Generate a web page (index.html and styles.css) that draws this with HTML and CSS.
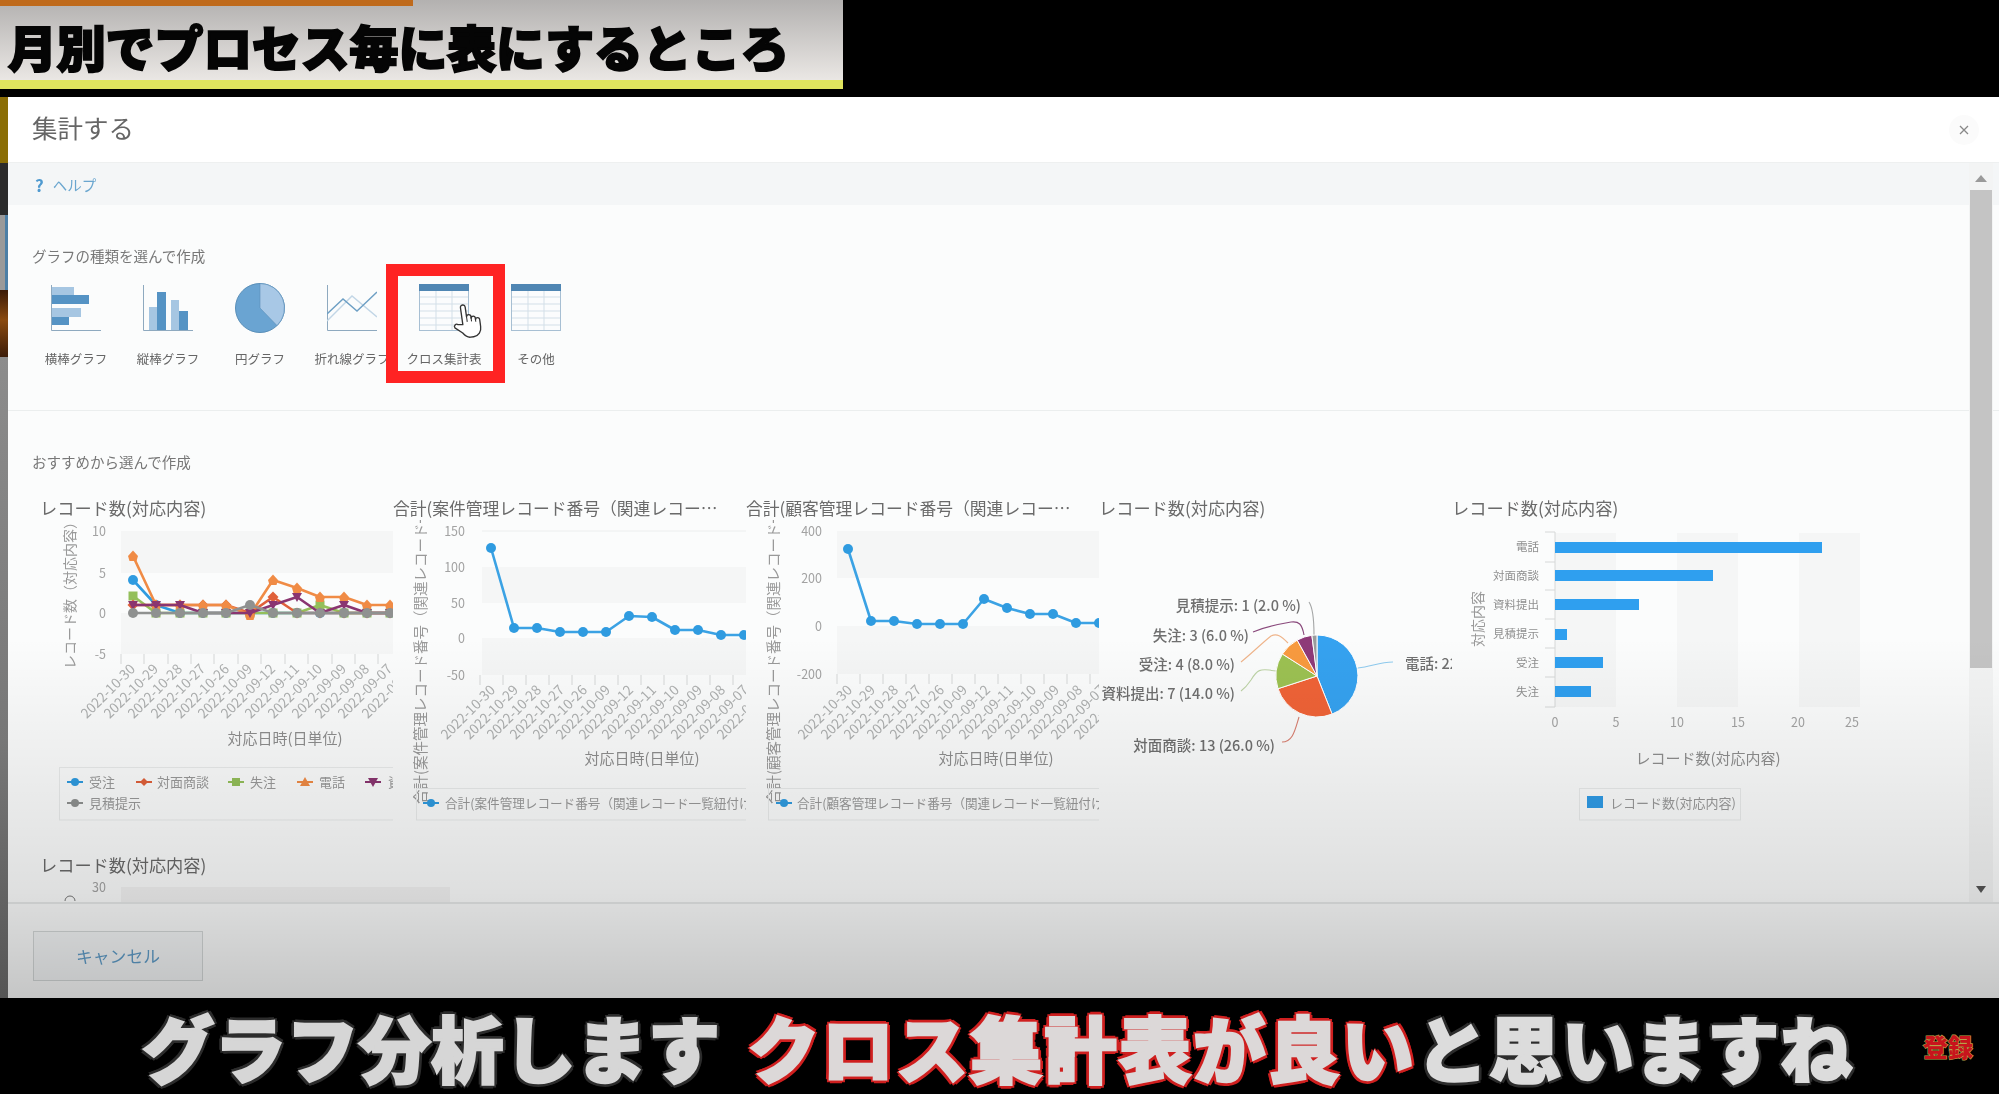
FILE: index.html
```html
<!DOCTYPE html>
<html lang="ja">
<head>
<meta charset="utf-8">
<title>集計する</title>
<link rel="stylesheet" href="styles.css">
</head>
<body>
<header class="top-bar">
  <div class="banner">
    <div class="banner-strip"></div>
    <div class="banner-text">月別でプロセス毎に表にするところ</div>
  </div>
</header>

<div class="stage">
  <div class="edge">
    <div class="edge-a"></div><div class="edge-b"></div><div class="edge-c"></div><div class="edge-d"></div><div class="edge-e"></div>
  </div>
  <main class="modal">
    <div class="modal-head">
      <h1 class="modal-title">集計する</h1>
      <div class="close"><svg width="10" height="10" viewBox="0 0 10 10"><path d="M1 1 9 9M9 1 1 9" class="close-x"/></svg></div>
    </div>

    <div class="modal-body">
      <div class="help"><span class="help-q">?</span><span>ヘルプ</span></div>

      <section class="types">
        <h2 class="label">グラフの種類を選んで作成</h2>
        <div class="type-row">
          <div class="type">
            <svg class="type-icon" viewBox="0 0 50 48">
              <path class="ic-axis" d="M.5 1V46.5H50"/>
              <rect class="ic-light" x="1" y="3" width="22" height="8"/><rect class="ic-dark" x="1" y="11" width="37" height="9"/>
              <rect class="ic-light" x="1" y="24" width="29" height="9"/><rect class="ic-dark" x="1" y="33" width="17" height="8"/>
            </svg>
            <span>横棒グラフ</span>
          </div>
          <div class="type">
            <svg class="type-icon" viewBox="0 0 50 48">
              <path class="ic-axis" d="M.5 1V46.5H50"/>
              <rect class="ic-light" x="6" y="23" width="8" height="23"/><rect class="ic-dark" x="14" y="8" width="9" height="38"/>
              <rect class="ic-light" x="28" y="16" width="8" height="30"/><rect class="ic-dark" x="36" y="27" width="9" height="19"/>
            </svg>
            <span>縦棒グラフ</span>
          </div>
          <div class="type">
            <svg class="type-icon" viewBox="0 0 50 50">
              <circle class="ic-pie" cx="25" cy="25" r="24.5"/>
              <path class="ic-slice" d="M25 25V.5A24.5 24.5 0 0 1 42 42.600Z"/>
            </svg>
            <span>円グラフ</span>
          </div>
          <div class="type">
            <svg class="type-icon" viewBox="0 0 50 48">
              <path class="ic-axis" d="M.5 1V46.500H50"/>
              <path class="ic-line-l" d="M0 37 25 12 50 33"/>
              <path class="ic-line-d" d="M0 30 16 15 30 27 50 8"/>
            </svg>
            <span>折れ線グラフ</span>
          </div>
          <div class="type selected">
            <svg class="type-icon" viewBox="0 0 50 48">
              <g id="tbl">
                <rect class="tb-frame" x=".5" y=".5" width="49" height="46"/>
                <path class="tb-grid" d="M1 13H49M1 20H49M1 27H49M1 34H49M1 41H49M17 7V46M33 7V46"/>
                <rect class="tb-head" x="0" y="0" width="50" height="7"/>
              </g>
            </svg>
            <span>クロス集計表</span>
            <svg class="hand" viewBox="0 0 28 34">
              <path class="hand-body" d="M10 20V3.500a2.300 2.300 0 0 1 4.600 0V13a2.100 2.100 0 0 1 4.200.6V15a2 2 0 0 1 4 .6V17a2 2 0 0 1 4 .6V24c0 5-3 9-8 9h-3c-3 0-5-2-7-5L2 22a2.200 2.200 0 0 1 3.400-2.700Z"/>
              <path class="hand-line" d="M14.600 13V18M18.800 14V18M22.800 16V19"/>
            </svg>
          </div>
          <div class="type">
            <svg class="type-icon" viewBox="0 0 50 48"><use href="#tbl"/></svg>
            <span>その他</span>
          </div>
        </div>
      </section>

      <section class="recommend">
        <h2 class="label">おすすめから選んで作成</h2>
        <div class="charts">

          <article class="chart">
            <h3 class="chart-title">レコード数(対応内容)</h3>
            <svg class="chart-svg" viewBox="0 0 353 305">
              <defs>
                <marker id="mb" markerUnits="userSpaceOnUse" markerWidth="12" markerHeight="12" refX="6" refY="6"><circle cx="6" cy="6" r="5" fill="#2f9be0"/></marker>
                <marker id="mr" markerUnits="userSpaceOnUse" markerWidth="12" markerHeight="12" refX="6" refY="6"><path d="M6 .5 11.500 6 6 11.500 .5 6Z" fill="#e0603a"/></marker>
                <marker id="mg" markerUnits="userSpaceOnUse" markerWidth="12" markerHeight="12" refX="6" refY="6"><rect x="1.500" y="1.500" width="9" height="9" fill="#94bf5a"/></marker>
                <marker id="mo" markerUnits="userSpaceOnUse" markerWidth="12" markerHeight="12" refX="6" refY="6"><path d="M6 .5 11 6 9.500 11H2.500L1 6Z" fill="#f08b45"/></marker>
                <marker id="mp" markerUnits="userSpaceOnUse" markerWidth="12" markerHeight="12" refX="6" refY="6"><path d="M1 2H11L6 11Z" fill="#8a3570"/></marker>
                <marker id="mk" markerUnits="userSpaceOnUse" markerWidth="12" markerHeight="12" refX="6" refY="6"><circle cx="6" cy="6" r="5" fill="#8f9190"/></marker>
              </defs>
              <rect class="band" x="81" y="11" width="273" height="42"/>
              <rect class="band" x="81" y="93" width="273" height="41"/>
              <g class="num" text-anchor="end">
                <text x="66" y="16">10</text><text x="66" y="58">5</text><text x="66" y="98">0</text><text x="66" y="139">-5</text>
              </g>
              <path class="tick" d="M81 134v10M104 134v10M128 134v10M151 134v10M174 134v10M198 134v10M221 134v10M245 134v10M268 134v10M292 134v10M315 134v10M338 134v10"/>
              <text class="ytitle" transform="translate(35 72) rotate(-90)" text-anchor="middle">レコード数（対応内容）</text>
              <polyline class="s s-blue" points="93,60 116,85 140,93 163,93 186,93 210,93 233,93 257,93 280,93 304,93 327,93 350,93 373,93" marker-start="url(#mb)" marker-mid="url(#mb)" marker-end="url(#mb)"/>
              <polyline class="s s-green" points="93,76 116,93 140,93 163,93 186,93 210,93 233,93 257,93 280,85 304,93 327,93 350,93 373,93" marker-start="url(#mg)" marker-mid="url(#mg)" marker-end="url(#mg)"/>
              <polyline class="s s-red" points="93,85 116,85 140,85 163,85 186,85 210,93 233,77 257,93 280,93 304,93 327,93 350,93 373,93" marker-start="url(#mr)" marker-mid="url(#mr)" marker-end="url(#mr)"/>
              <polyline class="s s-orange" points="93,36 116,85 140,85 163,85 186,85 210,95 233,60 257,68 280,77 304,77 327,85 350,85 373,85" marker-start="url(#mo)" marker-mid="url(#mo)" marker-end="url(#mo)"/>
              <polyline class="s s-purple" points="93,85 116,85 140,85 163,93 186,93 210,93 233,85 257,77 280,93 304,85 327,93 350,93 373,93" marker-start="url(#mp)" marker-mid="url(#mp)" marker-end="url(#mp)"/>
              <polyline class="s s-gray" points="93,93 116,93 140,93 163,93 186,93 210,85 233,93 257,93 280,93 304,93 327,93 350,93 373,93" marker-start="url(#mk)" marker-mid="url(#mk)" marker-end="url(#mk)"/>
              <g class="date" text-anchor="end">
                <text transform="translate(96 150) rotate(-45)">2022-10-30</text><text transform="translate(119 150) rotate(-45)">2022-10-29</text><text transform="translate(143 150) rotate(-45)">2022-10-28</text><text transform="translate(166 150) rotate(-45)">2022-10-27</text><text transform="translate(190 150) rotate(-45)">2022-10-26</text><text transform="translate(213 150) rotate(-45)">2022-10-09</text><text transform="translate(236 150) rotate(-45)">2022-09-12</text><text transform="translate(260 150) rotate(-45)">2022-09-11</text><text transform="translate(283 150) rotate(-45)">2022-09-10</text><text transform="translate(307 150) rotate(-45)">2022-09-09</text><text transform="translate(330 150) rotate(-45)">2022-09-08</text><text transform="translate(353 150) rotate(-45)">2022-09-07</text><text transform="translate(377 150) rotate(-45)">2022-09-06</text>
              </g>
              <text class="axis-title" x="245" y="224" text-anchor="middle">対応日時(日単位)</text>
              <rect class="legend-box" x="19.500" y="247.500" width="340" height="52.500"/>
              <g class="legend">
                <path class="lg-b" d="M27 262h16"/><circle cx="35" cy="262" r="4" class="lg-bf"/><text x="49" y="267">受注</text>
                <path class="lg-r" d="M96 262h16"/><path d="M104 258l4 4-4 4-4-4Z" class="lg-rf"/><text x="117" y="267">対面商談</text>
                <path class="lg-g" d="M188 262h16"/><rect x="192" y="258" width="8" height="8" class="lg-gf"/><text x="210" y="267">失注</text>
                <path class="lg-o" d="M257 262h16"/><path d="M265 257l5 9h-10Z" class="lg-of"/><text x="279" y="267">電話</text>
                <path class="lg-p" d="M325 262h16"/><path d="M328 258h10l-5 9Z" class="lg-pf"/><text x="348" y="267">資料提出</text>
                <path class="lg-k" d="M27 283h16"/><circle cx="35" cy="283" r="4" class="lg-kf"/><text x="49" y="288">見積提示</text>
              </g>
            </svg>
          </article>

          <article class="chart">
            <h3 class="chart-title chart-title-long">合計(案件管理レコード番号（関連レコー…</h3>
            <svg class="chart-svg" viewBox="0 0 353 305">
              <rect class="band" x="89" y="47" width="264" height="36"/>
              <rect class="band" x="89" y="118" width="264" height="37"/>
              <path class="gridline" d="M89 11H353"/>
              <g class="num" text-anchor="end">
                <text x="72" y="16">150</text><text x="72" y="52">100</text><text x="72" y="88">50</text><text x="72" y="123">0</text><text x="72" y="160">-50</text>
              </g>
              <path class="tick" d="M87 155v10M110 155v10M133 155v10M156 155v10M179 155v10M202 155v10M225 155v10M248 155v10M271 155v10M294 155v10M317 155v10M340 155v10"/>
              <text class="ytitle ytitle-long" transform="translate(33 284) rotate(-90)">合計(案件管理レコード番号（関連レコード一覧紐付け</text>
              <polyline class="s s-blue2" points="98,28 121,108 144,108 167,112 190,112 213,112 236,96 259,97 282,110 305,110 328,115 351,115" marker-start="url(#mb)" marker-mid="url(#mb)" marker-end="url(#mb)"/>
              <g class="date" text-anchor="end">
                <text transform="translate(103 171) rotate(-45)">2022-10-30</text><text transform="translate(126 171) rotate(-45)">2022-10-29</text><text transform="translate(149 171) rotate(-45)">2022-10-28</text><text transform="translate(172 171) rotate(-45)">2022-10-27</text><text transform="translate(195 171) rotate(-45)">2022-10-26</text><text transform="translate(218 171) rotate(-45)">2022-10-09</text><text transform="translate(241 171) rotate(-45)">2022-09-12</text><text transform="translate(264 171) rotate(-45)">2022-09-11</text><text transform="translate(287 171) rotate(-45)">2022-09-10</text><text transform="translate(310 171) rotate(-45)">2022-09-09</text><text transform="translate(333 171) rotate(-45)">2022-09-08</text><text transform="translate(356 171) rotate(-45)">2022-09-07</text><text transform="translate(379 171) rotate(-45)">2022-09-06</text>
              </g>
              <text class="axis-title" x="249" y="244" text-anchor="middle">対応日時(日単位)</text>
              <rect class="legend-box" x="23.500" y="268.500" width="340" height="31.500"/>
              <g class="legend legend-tight">
                <path class="lg-b" d="M30 283h16"/><circle cx="38" cy="283" r="4" class="lg-bf"/><text x="52" y="288">合計(案件管理レコード番号（関連レコード一覧紐付け</text>
              </g>
            </svg>
          </article>

          <article class="chart">
            <h3 class="chart-title chart-title-long">合計(顧客管理レコード番号（関連レコー…</h3>
            <svg class="chart-svg" viewBox="0 0 353 305">
              <rect class="band" x="91" y="11" width="262" height="47"/>
              <rect class="band" x="91" y="106" width="262" height="48"/>
              <g class="num" text-anchor="end">
                <text x="76" y="16">400</text><text x="76" y="63">200</text><text x="76" y="111">0</text><text x="76" y="159">-200</text>
              </g>
              <path class="tick" d="M91 154v10M114 154v10M137 154v10M160 154v10M183 154v10M206 154v10M229 154v10M252 154v10M275 154v10M298 154v10M321 154v10M344 154v10"/>
              <text class="ytitle ytitle-long" transform="translate(33 284) rotate(-90)">合計(顧客管理レコード番号（関連レコード一覧紐付け</text>
              <polyline class="s s-blue2" points="102,29 125,101 148,101 171,104 194,104 217,104 238,79 261,88 284,94 307,94 330,103 353,103" marker-start="url(#mb)" marker-mid="url(#mb)" marker-end="url(#mb)"/>
              <g class="date" text-anchor="end">
                <text transform="translate(107 171) rotate(-45)">2022-10-30</text><text transform="translate(130 171) rotate(-45)">2022-10-29</text><text transform="translate(153 171) rotate(-45)">2022-10-28</text><text transform="translate(176 171) rotate(-45)">2022-10-27</text><text transform="translate(199 171) rotate(-45)">2022-10-26</text><text transform="translate(222 171) rotate(-45)">2022-10-09</text><text transform="translate(245 171) rotate(-45)">2022-09-12</text><text transform="translate(268 171) rotate(-45)">2022-09-11</text><text transform="translate(291 171) rotate(-45)">2022-09-10</text><text transform="translate(314 171) rotate(-45)">2022-09-09</text><text transform="translate(337 171) rotate(-45)">2022-09-08</text><text transform="translate(360 171) rotate(-45)">2022-09-07</text><text transform="translate(383 171) rotate(-45)">2022-09-06</text>
              </g>
              <text class="axis-title" x="250" y="244" text-anchor="middle">対応日時(日単位)</text>
              <rect class="legend-box" x="22.500" y="268.500" width="340" height="31.500"/>
              <g class="legend legend-tight">
                <path class="lg-b" d="M30 283h16"/><circle cx="38" cy="283" r="4" class="lg-bf"/><text x="51" y="288">合計(顧客管理レコード番号（関連レコード一覧紐付け</text>
              </g>
            </svg>
          </article>

          <article class="chart">
            <h3 class="chart-title">レコード数(対応内容)</h3>
            <svg class="chart-svg" viewBox="0 0 353 305">
              <path class="pie-line pl-blue" d="M259 148C272 147 280 142 294 142"/>
              <path class="pie-line pl-red" d="M200 197C196 210 194 222 183 222"/>
              <path class="pie-line pl-green" d="M177 151C160 148 158 150 152 160 148 166 146 168 142 171"/>
              <path class="pie-line pl-orange" d="M189 123C182 116 178 113 172 116 162 124 152 134 142 142"/>
              <path class="pie-line pl-purple" d="M205 115C203 104 200 101 192 102 180 104 166 107 154 112"/>
              <path class="pie-line pl-gray" d="M215 115C215 100 214 88 210 82"/>
              <g class="pie">
                <path fill="#35a2f0" d="M218 156V115A41 41 0 0 1 233.100 194.100Z"/>
                <path fill="#f06337" d="M218 156 233.100 194.100A41 41 0 0 1 179 168.700Z"/>
                <path fill="#9cc152" d="M218 156 179 168.700A41 41 0 0 1 183.400 134Z"/>
                <path fill="#f89a3f" d="M218 156 183.400 134A41 41 0 0 1 198.200 120.100Z"/>
                <path fill="#8e3a78" d="M218 156 198.200 120.100A41 41 0 0 1 212.900 115.300Z"/>
                <path fill="#9a9c9c" d="M218 156 212.900 115.300A41 41 0 0 1 218 115Z"/>
              </g>
              <g class="pie-label" text-anchor="end">
                <text x="202" y="91">見積提示: 1 (2.0 %)</text>
                <text x="150" y="121">失注: 3 (6.0 %)</text>
                <text x="136" y="150">受注: 4 (8.0 %)</text>
                <text x="136" y="179">資料提出: 7 (14.0 %)</text>
                <text x="176" y="231">対面商談: 13 (26.0 %)</text>
              </g>
              <text class="pie-label" x="306" y="149">電話: 22 (44.0 %)</text>
            </svg>
          </article>

          <article class="chart chart-wide">
            <h3 class="chart-title">レコード数(対応内容)</h3>
            <svg class="chart-svg" viewBox="0 0 440 305">
              <rect class="band" x="103" y="13" width="61" height="174"/>
              <rect class="band" x="225" y="13" width="61" height="174"/>
              <rect class="band" x="347" y="13" width="61" height="174"/>
              <path class="tick" d="M103 12V187M93 12h10M93 42h10M93 70h10M93 99h10M93 128h10M93 157h10M93 187h10"/>
              <g class="bars">
                <rect x="103" y="22" width="267" height="11"/>
                <rect x="103" y="50" width="158" height="11"/>
                <rect x="103" y="79" width="84" height="11"/>
                <rect x="103" y="109" width="12" height="11"/>
                <rect x="103" y="137" width="48" height="11"/>
                <rect x="103" y="166" width="36" height="11"/>
              </g>
              <g class="cat" text-anchor="end">
                <text x="87" y="31">電話</text><text x="87" y="60">対面商談</text><text x="87" y="89">資料提出</text><text x="87" y="118">見積提示</text><text x="87" y="147">受注</text><text x="87" y="176">失注</text>
              </g>
              <text class="ytitle" transform="translate(31 99) rotate(-90)" text-anchor="middle">対応内容</text>
              <g class="num" text-anchor="middle">
                <text x="103" y="207">0</text><text x="164" y="207">5</text><text x="225" y="207">10</text><text x="286" y="207">15</text><text x="346" y="207">20</text><text x="400" y="207">25</text>
              </g>
              <text class="axis-title" x="256" y="244" text-anchor="middle">レコード数(対応内容)</text>
              <rect class="legend-box" x="127.500" y="268.500" width="161" height="31.500"/>
              <rect class="lg-sq" x="135" y="276" width="16" height="12"/>
              <g class="legend"><text x="158" y="288">レコード数(対応内容)</text></g>
            </svg>
          </article>

          <article class="chart chart-partial">
            <h3 class="chart-title">レコード数(対応内容)</h3>
            <svg class="chart-svg" viewBox="0 0 410 25">
              <rect class="band band-deep" x="81" y="10" width="329" height="15"/>
              <text class="num" x="66" y="15" text-anchor="end">30</text>
              <path class="arc" d="M25 24a5 5 0 0 1 10 0"/>
            </svg>
          </article>
        </div>
      </section>

      <div class="scrollbar">
        <svg class="sb-arrow" width="12" height="7" viewBox="0 0 12 7"><path d="M6 0 12 7H0Z"/></svg>
        <div class="sb-thumb"></div>
        <svg class="sb-arrow sb-arrow-down" width="10" height="7" viewBox="0 0 10 7"><path d="M0 0H10L5 7Z"/></svg>
      </div>
    </div>

    <footer class="modal-foot">
      <button class="cancel" type="button">キャンセル</button>
    </footer>
    <div class="fade"></div>
  </main>
</div>

<footer class="subtitle">
  <span class="sub-white">グラフ分析します</span>
  <span class="sub-red">クロス集計表が良い</span>
  <span class="sub-white sub-tail">と思いますね</span>
  <span class="subscribe">登録</span>
</footer>
</body>
</html>
```
FILE: styles.css
```css
* { box-sizing: border-box; }
html, body { margin: 0; padding: 0; }
body {
  width: 1999px;
  height: 1094px;
  overflow: hidden;
  background: #000;
  display: flex;
  flex-direction: column;
  font-family: "Noto Sans CJK JP", "Noto Sans", sans-serif;
}

/* top caption */
.top-bar { height: 97px; flex: none; }
.banner {
  width: 843px;
  height: 89px;
  display: flex;
  flex-direction: column;
  background: linear-gradient(#b3b1b0, #eae7e4);
  border-bottom: 9px solid #e0e45e;
}
.banner-strip { width: 413px; height: 6px; flex: none; background: #bf6a1c; }
.banner-text {
  padding: 7px 0 0 8px;
  font-size: 48.800px;
  line-height: 66px;
  font-weight: 900;
  color: #050505;
  white-space: nowrap;
  -webkit-text-stroke: 2.200px #050505;
}

/* middle */
.stage { height: 901px; flex: none; display: flex; }
.edge { width: 8px; flex: none; display: flex; flex-direction: column; }
.edge-a { height: 66px; background: #8a6d05; }
.edge-b { height: 52px; background: #2b2b2b; }
.edge-c { height: 75px; background: linear-gradient(90deg, #9a9a9a 60%, #4c7fa6 60%); }
.edge-d { height: 67px; background: linear-gradient(#3a1a06, #8a4a10 45%, #3c1c08); }
.edge-e { flex: 1; background: linear-gradient(#8c8c8c, #777 60%, #555); }

.modal {
  flex: 1;
  position: relative;
  display: flex;
  flex-direction: column;
  background: #fff;
  filter: blur(.45px);
}
.modal-head {
  height: 66px;
  flex: none;
  display: flex;
  align-items: center;
  justify-content: space-between;
  padding: 0 20px 0 24px;
  border-bottom: 1px solid #eef0f0;
}
.modal-title { margin: -5px 0 0; font-size: 25.500px; font-weight: 400; color: #666; line-height: 60px; }
.close {
  width: 30px;
  height: 30px;
  border-radius: 50%;
  background: #fbfbfb;
  display: flex;
  align-items: center;
  justify-content: center;
}
.close-x { stroke: #888; stroke-width: 1.300; fill: none; }

.modal-body {
  height: 741px;
  flex: none;
  position: relative;
  overflow: hidden;
  background: #fbfcfc;
  border-bottom: 2px solid #e6e8e8;
}
.help {
  height: 42px;
  background: #f4f6f7;
  padding-left: 27px;
  display: flex;
  align-items: center;
  gap: 9px;
  font-size: 14.500px;
  color: #6aa6cf;
}
.help-q { font-size: 17px; font-weight: 700; color: #4f9ad0; }

.label { margin: 0; font-size: 14.500px; font-weight: 400; line-height: 20px; color: #777; white-space: nowrap; }

.types { height: 206px; padding: 41px 0 0 24px; border-bottom: 1px solid #ebeeee; }
.type-row { display: flex; margin: 17px 0 0 -2px; }
.type {
  position: relative;
  width: 92px;
  display: flex;
  flex-direction: column;
  align-items: center;
  font-size: 12.500px;
  color: #666;
  white-space: nowrap;
}
.type span { margin-top: 17px; line-height: 18px; }
.type-icon { width: 50px; height: 50px; display: block; }
.selected::after {
  content: "";
  box-sizing: border-box;
  position: absolute;
  left: -12px;
  top: -19px;
  width: 119px;
  height: 119px;
  border: 12px solid #ff2323;
}
.hand { position: absolute; left: 54px; top: 20px; width: 29px; height: 36px; z-index: 2; transform: rotate(-8deg); }
.hand-body { fill: #fff; stroke: #333; stroke-width: 1.300; stroke-linejoin: round; }
.hand-line { fill: none; stroke: #333; stroke-width: 1; }
.ic-axis { fill: none; stroke: #8ea9bf; stroke-width: 1; }
.ic-light { fill: #a6c6e2; }
.ic-dark { fill: #5593c4; }
.ic-pie { fill: #6aa4d2; stroke: #5a8fb8; stroke-width: 1; }
.ic-slice { fill: #a8c8e6; stroke: #5a8fb8; stroke-width: .6; }
.ic-line-l { fill: none; stroke: #c2d6e6; stroke-width: 1.400; }
.ic-line-d { fill: none; stroke: #6d9fc4; stroke-width: 1.400; }
.tb-frame { fill: #fbfcfd; stroke: #a7bfd3; stroke-width: 1; }
.tb-grid { fill: none; stroke: #d3dfe8; stroke-width: 1; }
.tb-head { fill: #4f86b3; }

.recommend { padding: 41px 0 0 24px; }
.charts {
  display: grid;
  grid-template-columns: repeat(4, 353px) 440px;
  row-gap: 27px;
  margin: 23px 0 0 8px;
}
.chart { width: 353px; height: 330px; }
.chart-title {
  margin: 0;
  height: 25px;
  font-size: 17.200px;
  font-weight: 400;
  line-height: 26px;
  color: #6a6a6a;
  white-space: nowrap;
  overflow: hidden;
}
.chart-title-long { font-size: 16.800px; }
.chart-svg { display: block; width: 353px; height: 305px; }
.chart-wide { width: 440px; }
.chart-wide .chart-svg { width: 440px; }
.chart-partial { grid-column: 1 / span 2; width: 410px; }
.chart-partial .chart-svg { width: 410px; height: 25px; }

.band { fill: #f5f6f6; }
.band-deep { fill: #f2f2f2; }
.gridline { stroke: #eceeee; fill: none; }
.num { font-size: 12.500px; fill: #a2a2a2; }
.tick { stroke: #d6d8d8; fill: none; stroke-width: 1; }
.date { font-size: 13.600px; fill: #adafaf; }
.ytitle { font-size: 14px; fill: #999; }
.ytitle-long { font-size: 14.500px; }
.axis-title { font-size: 15px; fill: #8e8e8e; }
.s { fill: none; stroke-width: 2.600; stroke-linejoin: round; }
.s-blue { stroke: #2f9be0; }
.s-blue2 { stroke: #3ba2e4; }
.s-green { stroke: #94bf5a; }
.s-red { stroke: #e0603a; }
.s-orange { stroke: #f08b45; }
.s-purple { stroke: #8a3570; }
.s-gray { stroke: #8f9190; }
.legend-box { fill: none; stroke: #e9ebeb; stroke-width: 1; }
.legend { font-size: 13px; fill: #999; }
.legend-tight { font-size: 12.600px; }
.lg-b, .lg-r, .lg-g, .lg-o, .lg-p, .lg-k { fill: none; stroke-width: 2; }
.lg-b { stroke: #2f9be0; } .lg-bf { fill: #2f9be0; }
.lg-r { stroke: #e0603a; } .lg-rf { fill: #e0603a; }
.lg-g { stroke: #94bf5a; } .lg-gf { fill: #94bf5a; }
.lg-o { stroke: #f08b45; } .lg-of { fill: #f08b45; }
.lg-p { stroke: #8a3570; } .lg-pf { fill: #8a3570; }
.lg-k { stroke: #8f9190; } .lg-kf { fill: #8f9190; }
.lg-sq { fill: #2f9be6; }
.pie path { stroke: #fff; stroke-width: 1; }
.pie-line { fill: none; stroke-width: 1.100; }
.pl-blue { stroke: #8fcbef; }
.pl-red { stroke: #d97f70; }
.pl-green { stroke: #bdd3a6; }
.pl-orange { stroke: #efb48a; }
.pl-purple { stroke: #8a4a7c; }
.pl-gray { stroke: #a4a6a6; }
.pie-label { font-size: 14.500px; font-weight: 500; fill: #6f6f6f; }
.bars rect { fill: #2f9fef; }
.cat { font-size: 11.500px; fill: #8f8f8f; }
.arc { fill: none; stroke: #777; stroke-width: 1; }

.scrollbar {
  position: absolute;
  top: 0;
  bottom: 0;
  left: 1961px;
  width: 24px;
  padding: 12px 1px 9px;
  background: #f3f4f4;
  display: flex;
  flex-direction: column;
  align-items: center;
}
.sb-arrow { flex: none; fill: #9a9a9a; }
.sb-arrow-down { margin-top: auto; fill: #555; }
.sb-thumb { width: 22px; height: 478px; flex: none; margin-top: 8px; background: #c4c4c4; }

.modal-foot { flex: 1; padding: 27px 0 0 25px; background: #fafbfb; }
.cancel {
  width: 170px;
  height: 50px;
  background: #f4f6f7;
  border: 1px solid #d4d8d8;
  border-radius: 0;
  font: 400 16.800px "Noto Sans CJK JP", sans-serif;
  color: #5f9cc8;
}
.fade {
  position: absolute;
  inset: 0;
  pointer-events: none;
  background: linear-gradient(rgba(0,0,0,0) 0, rgba(0,0,0,0) 60%, rgba(0,0,0,.115) 88%, rgba(0,0,0,.21) 100%);
}

/* subtitle */
.subtitle {
  flex: 1;
  display: flex;
  align-items: center;
  padding: 0 26px 0 142px;
  font-size: 72px;
  font-weight: 900;
  line-height: 96px;
  white-space: nowrap;
}
.sub-white {
  color: #d6d6d6;
  -webkit-text-stroke: 2.500px #d6d6d6;
  letter-spacing: .3px;
  text-shadow: 4px 0 #2c2c2c, -4px 0 #2c2c2c, 0 4px #2c2c2c, 0 -4px #2c2c2c, 3px 3px #2c2c2c, -3px 3px #2c2c2c, 3px -3px #2c2c2c, -3px -3px #2c2c2c;
}
.sub-red {
  color: #dcd8d8;
  -webkit-text-stroke: 2.500px #dcd8d8;
  margin-left: 27px;
  letter-spacing: 2.300px;
  text-shadow: 4px 0 #cf1f1f, -4px 0 #cf1f1f, 0 4px #cf1f1f, 0 -4px #cf1f1f, 3px 3px #cf1f1f, -3px 3px #cf1f1f, 3px -3px #cf1f1f, -3px -3px #cf1f1f;
}
.sub-tail { color: #dcdcdc; -webkit-text-stroke-color: #dcdcdc; letter-spacing: .8px; }
.subscribe {
  margin-left: auto;
  font-size: 25px;
  font-weight: 900;
  line-height: 30px;
  color: #c8141c;
  -webkit-text-stroke: 1.200px #b8a04a;
  paint-order: stroke fill;
}
```
